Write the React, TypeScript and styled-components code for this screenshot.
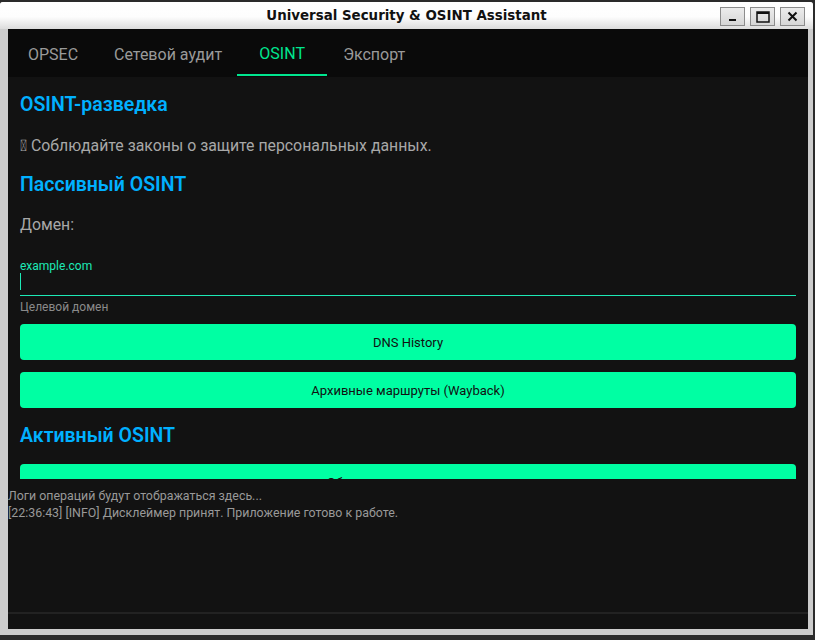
import React from "react";
import styled, { createGlobalStyle } from "styled-components";

const GlobalStyle = createGlobalStyle`
  html, body {
    margin: 0;
    padding: 0;
    background: #2b2b2b;
    width: 815px;
    height: 640px;
    overflow: hidden;
  }
  * {
    box-sizing: border-box;
  }
`;

const ACCENT = "#00ffa3";
const TEAL = "#1de9b6";
const BLUE = "#00b0ff";

const Desktop = styled.div`
  width: 815px;
  height: 640px;
  padding: 2px 2px 5px 0;
  background: #2b2b2b;
`;

const Window = styled.div`
  height: 100%;
  display: flex;
  flex-direction: column;
  background: #cccccc;
  border-radius: 3px 3px 0 0;
  padding: 0 5px 6px 8px;
`;

const TitleBar = styled.header`
  height: 27px;
  margin: 0 -5px 0 -8px;
  padding: 0 8px;
  display: flex;
  align-items: center;
  position: relative;
  background: linear-gradient(#ffffff 0%, #fdfdfd 55%, #dcdcdc 100%);
  border-radius: 3px 3px 0 0;
`;

const TitleText = styled.div`
  flex: 1;
  text-align: center;
  font-family: "DejaVu Sans", sans-serif;
  font-weight: bold;
  font-size: 13.4px;
  color: #111;
`;

const WindowButtons = styled.div`
  position: absolute;
  right: 8px;
  top: 5px;
  display: flex;
  gap: 5px;
`;

const WinButton = styled.div`
  width: 25px;
  height: 19px;
  background: linear-gradient(#ececec, #d6d6d6);
  border: 1px solid #8c8c8c;
  display: flex;
  align-items: center;
  justify-content: center;
`;

const Body = styled.div`
  flex: 1;
  display: flex;
  flex-direction: column;
  background: #121212;
  min-height: 0;
  font-family: Roboto, "Noto Sans", sans-serif;
`;

const TabBar = styled.nav`
  height: 48px;
  display: flex;
  background: #0a0a0a;
  flex-shrink: 0;
`;

const Tab = styled.div<{ $active?: boolean }>`
  min-width: 90px;
  padding: 3px 16px 0;
  margin-left: ${(p) => (p.$active ? "-1px" : "0")};
  display: flex;
  align-items: center;
  justify-content: center;
  font-size: 16px;
  color: ${(p) => (p.$active ? "#00e68f" : "#9a9a9a")};
  border-bottom: ${(p) => (p.$active ? "2px solid #00e68f" : "none")};
  margin-bottom: ${(p) => (p.$active ? "1px" : "0")};
`;

const Scroll = styled.div`
  height: 402px;
  overflow: hidden;
  padding: 0 12px;
  flex-shrink: 0;
`;

const Heading = styled.h2<{ $top: number }>`
  margin: ${(p) => p.$top}px 0 0;
  font-size: 19.5px;
  line-height: 24px;
  font-weight: 600;
  color: ${BLUE};
`;

const Text = styled.p<{ $top: number }>`
  margin: ${(p) => p.$top}px 0 0;
  font-size: 15.85px;
  line-height: 20px;
  color: #a8a8a8;
`;

const Field = styled.div`
  margin-top: 24px;
  display: flex;
  flex-direction: column;
`;

const FieldLabel = styled.span`
  font-size: 12px;
  line-height: 14px;
  color: ${TEAL};
`;

const InputLine = styled.div`
  height: 23px;
  display: flex;
  align-items: flex-start;
  border-bottom: 1px solid ${TEAL};
`;

const Caret = styled.span`
  width: 1px;
  height: 17px;
  background: ${TEAL};
`;

const Helper = styled.span`
  margin-top: 4px;
  font-size: 12px;
  line-height: 14px;
  color: #8a8a8a;
`;

const ActionButton = styled.button<{ $top: number }>`
  display: block;
  width: 100%;
  height: 36px;
  margin-top: ${(p) => p.$top}px;
  border: none;
  border-radius: 4px;
  background: ${ACCENT};
  color: #111;
  font-family: Roboto, "Noto Sans", sans-serif;
  font-size: 13px;
`;

const LogArea = styled.div`
  flex: 1;
  padding-top: 8px;
  font-size: 12.4px;
  line-height: 17px;
  color: #999;
`;

const LogLine = styled.div`
  white-space: nowrap;
`;

const Separator = styled.div`
  height: 2px;
  background: #222;
  flex-shrink: 0;
`;

const StatusBar = styled.div`
  height: 15px;
  flex-shrink: 0;
`;

export default function App() {
  return (
    <>
      <GlobalStyle />
      <Desktop>
        <Window>
          <TitleBar>
            <TitleText>Universal Security &amp; OSINT Assistant</TitleText>
            <WindowButtons>
              <WinButton>
                <svg width="11" height="11" viewBox="0 0 11 11">
                  <rect x="2" y="8" width="7" height="2" fill="#111" />
                </svg>
              </WinButton>
              <WinButton>
                <svg width="14" height="12" viewBox="0 0 14 12">
                  <rect x="1" y="1" width="12" height="10" fill="none" stroke="#111" strokeWidth="1.5" />
                  <rect x="1" y="1" width="12" height="2" fill="#111" />
                </svg>
              </WinButton>
              <WinButton>
                <svg width="11" height="11" viewBox="0 0 11 11">
                  <path d="M1.5 1.5 L9.5 9.5 M9.5 1.5 L1.5 9.5" stroke="#111" strokeWidth="2" />
                </svg>
              </WinButton>
            </WindowButtons>
          </TitleBar>
          <Body>
            <TabBar>
              <Tab>OPSEC</Tab>
              <Tab>Сетевой аудит</Tab>
              <Tab $active>OSINT</Tab>
              <Tab>Экспорт</Tab>
            </TabBar>
            <Scroll>
              <Heading $top={16}>OSINT-разведка</Heading>
              <Text $top={19}>{"\uE000"} Соблюдайте законы о защите персональных данных.</Text>
              <Heading $top={17}>Пассивный OSINT</Heading>
              <Text $top={18}>Домен:</Text>
              <Field>
                <FieldLabel>example.com</FieldLabel>
                <InputLine>
                  <Caret />
                </InputLine>
                <Helper>Целевой домен</Helper>
              </Field>
              <ActionButton $top={10}>DNS History</ActionButton>
              <ActionButton $top={12}>Архивные маршруты (Wayback)</ActionButton>
              <Heading $top={16}>Активный OSINT</Heading>
              <ActionButton $top={16}>Обнаружение поддоменов</ActionButton>
            </Scroll>
            <LogArea>
              <LogLine>Логи операций будут отображаться здесь...</LogLine>
              <LogLine>[22:36:43] [INFO] Дисклеймер принят. Приложение готово к работе.</LogLine>
            </LogArea>
            <Separator />
            <StatusBar />
          </Body>
        </Window>
      </Desktop>
    </>
  );
}
